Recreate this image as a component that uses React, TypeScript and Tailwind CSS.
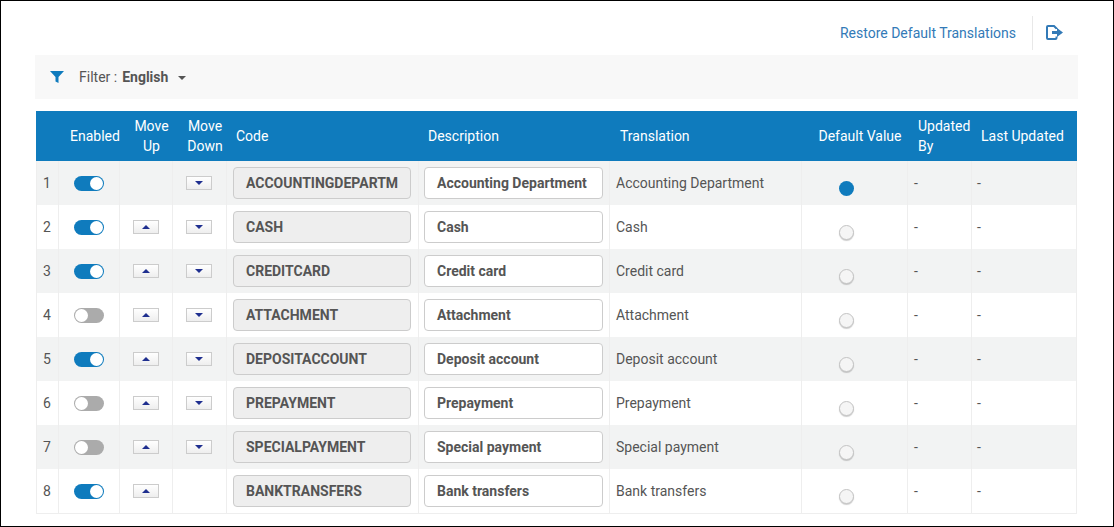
const rows = [
  { code: "ACCOUNTINGDEPARTM", desc: "Accounting Department", on: true, up: false, down: true, def: true },
  { code: "CASH", desc: "Cash", on: true, up: true, down: true, def: false },
  { code: "CREDITCARD", desc: "Credit card", on: true, up: true, down: true, def: false },
  { code: "ATTACHMENT", desc: "Attachment", on: false, up: true, down: true, def: false },
  { code: "DEPOSITACCOUNT", desc: "Deposit account", on: true, up: true, down: true, def: false },
  { code: "PREPAYMENT", desc: "Prepayment", on: false, up: true, down: true, def: false },
  { code: "SPECIALPAYMENT", desc: "Special payment", on: false, up: true, down: true, def: false },
  { code: "BANKTRANSFERS", desc: "Bank transfers", on: true, up: true, down: false, def: false },
];

const cols = "grid grid-cols-[22px_61px_53px_54px_192px_191px_192px_106px_64px_106px]";

function Toggle({ on }: { on: boolean }) {
  return (
    <div className={on ? "flex h-[15px] w-[30px] items-center justify-end rounded-full bg-[#0f7bbd]" : "flex h-[15px] w-[30px] items-center justify-start rounded-full bg-[#ababab]"}>
      <div className={on ? "h-[13px] w-[13px] rounded-full bg-white mr-px" : "h-[13px] w-[13px] rounded-full bg-white ml-px"} />
    </div>
  );
}

function Arrow({ dir }: { dir: "up" | "down" }) {
  return (
    <button className="flex h-[14px] w-[26px] items-center justify-center border border-[#cccccc] bg-gradient-to-b from-white to-[#eeeeee]">
      <svg width="8" height="4" viewBox="0 0 8 4">
        <path d={dir === "up" ? "M4 0 L8 4 L0 4 Z" : "M0 0 L8 0 L4 4 Z"} fill="#1f2f8f" />
      </svg>
    </button>
  );
}

function Radio({ on }: { on: boolean }) {
  if (on) return <div className="ml-[37px] mt-[20px] h-[15px] w-[15px] rounded-full bg-[#0f7bbd]" />;
  return <div className="ml-[37px] mt-[20px] h-[15px] w-[15px] rounded-full border border-[#c4c4c4] bg-[#f5f5f5] shadow-[0_1px_1px_rgba(0,0,0,0.2)]" />;
}

export default function App() {
  return (
    <div className="h-[527px] w-[1114px] overflow-hidden border border-black bg-white font-['Roboto',sans-serif] text-[14px] text-[#555555]">
      <div className="flex h-[54px] items-start justify-end pt-[15px] pr-[50px]">
        <a className="mt-[2px] mr-[16px] text-[14px] leading-[30px] text-[#337ab7]">Restore Default Translations</a>
        <div className="flex h-[34px] w-[31px] justify-end border-l border-[#e8e8e8] pt-[9px]">
          <svg width="17" height="15" viewBox="0 0 17 15">
            <path d="M10.5 4 V3.5 L8 1 H2 Q1 1 1 2 V13 Q1 14 2 14 H9.5 Q10.5 14 10.5 13 V11.5" fill="none" stroke="#337ab7" strokeWidth="2" />
            <path d="M6 6 H11 V3 L17 7.5 L11 12 V9 H6 Z" fill="#337ab7" />
          </svg>
        </div>
      </div>

      <div className="ml-[34px] flex h-[44px] w-[1043px] items-center bg-[#f8f8f8] pl-[15px]">
        <svg width="14" height="12" viewBox="0 0 14 12">
          <path d="M0 0 H14 L8.5 6 V12 L5.5 10.5 V6 Z" fill="#0f7bbd" />
        </svg>
        <span className="ml-[15px]">Filter :</span>
        <span className="ml-[5px] mt-[1px] font-bold">English</span>
        <span className="ml-[10px] mt-[1px] h-0 w-0 border-x-[4px] border-t-[4px] border-x-transparent border-t-[#555555]" />
      </div>

      <div className="ml-[35px] mt-[12px] w-[1041px] border-b border-[#eeeeee]">
        <div className={`${cols} h-[50px] items-center bg-[#0f7bbd] leading-[20px] text-white`}>
          <div />
          <div className="pl-[12px]">Enabled</div>
          <div className="pl-[12px] text-center">Move Up</div>
          <div className="pl-[12px] text-center">Move Down</div>
          <div className="pl-[10px]">Code</div>
          <div className="pl-[10px]">Description</div>
          <div className="pl-[11px]">Translation</div>
          <div className="pl-[12px] text-center">Default Value</div>
          <div className="pl-[11px]">Updated By</div>
          <div className="pl-[10px]">Last Updated</div>
        </div>
        {rows.map((r, i) => (
          <div key={r.code} className={`${cols} h-[44px] ${i % 2 === 0 ? "bg-[#f2f3f3]" : "bg-white"}`}>
            <div className="flex items-center border-l border-[#eeeeee] pl-[6px]">{i + 1}</div>
            <div className="flex items-center justify-center border-l border-[#eeeeee]"><Toggle on={r.on} /></div>
            <div className="flex items-center justify-center border-l border-[#eeeeee]">{r.up && <Arrow dir="up" />}</div>
            <div className="flex items-center border-l border-[#eeeeee] pl-[13px]">{r.down && <Arrow dir="down" />}</div>
            <div className="flex items-center border-l border-[#eeeeee] pl-[6px]">
              <div className="flex h-[32px] w-[178px] items-center rounded-[4px] border border-[#cccccc] bg-[#eeeeee] pl-[12px] font-bold">{r.code}</div>
            </div>
            <div className="flex items-center border-l border-[#eeeeee] pl-[5px]">
              <div className="flex h-[32px] w-[179px] items-center rounded-[4px] border border-[#cccccc] bg-white pl-[12px] font-bold">{r.desc}</div>
            </div>
            <div className="flex items-center border-l border-[#eeeeee] pl-[6px]">{r.desc}</div>
            <div className="flex border-l border-[#eeeeee]"><Radio on={r.def} /></div>
            <div className="flex items-center border-l border-[#eeeeee] pl-[6px]">-</div>
            <div className="flex items-center border-x border-[#eeeeee] pl-[5px]">-</div>
          </div>
        ))}
      </div>
    </div>
  );
}
